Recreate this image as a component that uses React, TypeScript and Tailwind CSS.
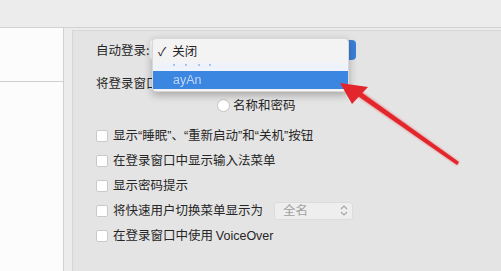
import React from 'react';

const font = { fontFamily: '"Noto Sans CJK SC", "Liberation Sans", sans-serif' };
const latin = { fontFamily: '"Liberation Sans", sans-serif' };

const Checkbox: React.FC = () => (
  <span className="w-[12px] h-[12px] rounded-[2px] bg-white border border-[#c9c9c9] shrink-0" />
);

const CheckRow: React.FC<{ children: React.ReactNode }> = ({ children }) => (
  <div className="h-[25px] flex items-center gap-[5px]">
    <Checkbox />
    <span>{children}</span>
  </div>
);

const Q: React.FC<{ children: React.ReactNode }> = ({ children }) => <span style={latin}>{children}</span>;

const App: React.FC = () => {
  return (
    <div
      className="relative w-[501px] h-[271px] overflow-hidden bg-[#ececec] text-[12.5px] leading-none text-[#262626]"
      style={font}
    >
      <div className="h-[28px] border-b border-[#d2d2d2]" />
      <div className="flex h-[243px]">
        <div className="w-[64px] bg-[#fcfcfc] border-r border-[#d0d0d0] flex flex-col">
          <div className="h-[54px] border-b border-[#cfcfcf]" />
        </div>
        <div className="w-[8px]" />
        <div className="flex-1 mt-[2px] bg-[#e4e4e4] border-t border-l border-[#d6d6d6] pl-[23px] pt-[7px]">
          <div className="h-[24px] flex items-center">
            <span>自动登录:</span>
            <div className="ml-[1px] w-[206px] h-[20px] rounded-[4px] bg-white flex justify-end">
              <span className="w-[16px] h-full rounded-r-[4px] bg-[#3d7fd9]" />
            </div>
          </div>
          <div className="h-[24px] mt-[9px] flex items-center">将登录窗口</div>
          <div className="h-[20px] flex items-center gap-[3px] pl-[121px]">
            <span className="w-[13px] h-[13px] rounded-full bg-white border border-[#c4c4c4]" />
            <span>名称和密码</span>
          </div>
          <div className="mt-[8px]">
            <CheckRow>
              显示<Q>“</Q>睡眠<Q>”</Q>、<Q>“</Q>重新启动<Q>”</Q>和<Q>“</Q>关机<Q>”</Q>按钮
            </CheckRow>
            <CheckRow>在登录窗口中显示输入法菜单</CheckRow>
            <CheckRow>显示密码提示</CheckRow>
            <div className="h-[25px] flex items-center gap-[5px]">
              <Checkbox />
              <span>将快速用户切换菜单显示为</span>
              <div className="ml-[6px] w-[79px] h-[18px] rounded-[3px] bg-[#eeeeee] border border-[#dcdcdc] flex items-center justify-between pl-[8px] pr-[4px] text-[#a0a0a0]">
                <span>全名</span>
                <svg width="8" height="11" viewBox="0 0 8 11" fill="none" stroke="#a6a6a6" strokeWidth="1.2">
                  <path d="M1 4 L4 1 L7 4" />
                  <path d="M1 7 L4 10 L7 7" />
                </svg>
              </div>
            </div>
            <CheckRow>
              在登录窗口中使用 <span style={latin}>VoiceOver</span>
            </CheckRow>
          </div>
        </div>
      </div>

      <div className="absolute left-[152px] top-[38px] w-[197px] h-[54px] rounded-[4px] bg-[#f3f3f3] shadow-[0_3px_8px_rgba(0,0,0,0.28)] border border-[#d8d8d8] flex flex-col">
        <div className="h-[24px] flex items-center pl-[5px] gap-[6px]">
          <span className="text-[12px]">✓</span>
          <span>关闭</span>
        </div>
        <div className="h-[8px] bg-[#eef3fb] flex items-start pl-[20px]">
          <svg width="40" height="4" viewBox="0 0 40 4" fill="#a9c3ea">
            <rect x="0" y="1" width="2" height="2" />
            <rect x="12" y="1" width="2" height="2" />
            <rect x="25" y="1" width="2" height="2" />
            <rect x="36" y="1" width="2" height="2" />
          </svg>
        </div>
        <div className="h-[18px] bg-[#3b86e0] flex items-center pl-[20px] text-[#dfe9f8]">
          <span className="opacity-80" style={latin}>ayAn</span>
        </div>
      </div>

      <svg className="absolute left-0 top-0" width="501" height="271" viewBox="0 0 501 271">
        <defs>
          <filter id="glow" x="-20%" y="-20%" width="140%" height="140%">
            <feGaussianBlur stdDeviation="0.8" />
          </filter>
        </defs>
        <g fill="#e3262b">
          <polygon points="459,162 457,165 354,94 358,89" filter="url(#glow)" opacity="0.5" />
          <polygon points="459,162 457,165 355,94 358,90" />
          <polygon points="340,83 368,87 352,104" />
        </g>
      </svg>
    </div>
  );
};

export default App;
